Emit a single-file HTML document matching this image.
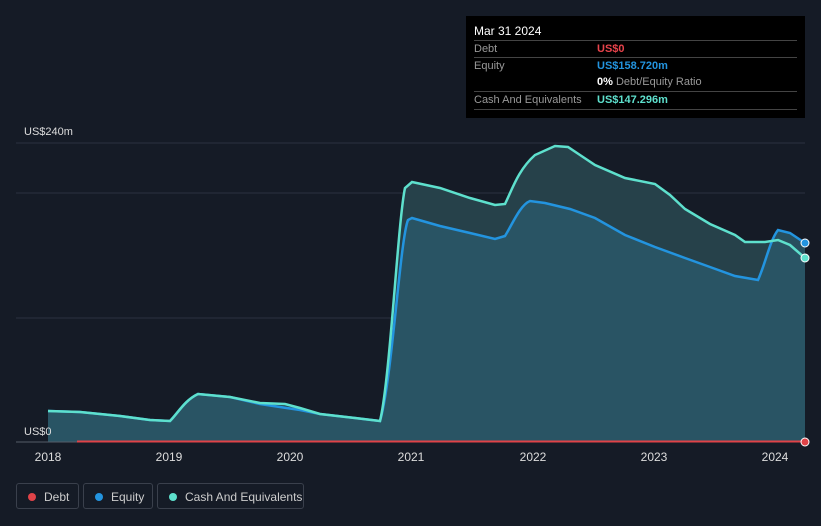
<!DOCTYPE html>
<html><head><meta charset="utf-8"><style>
html,body{margin:0;padding:0;background:#151b26;width:821px;height:526px;overflow:hidden;font-family:"Liberation Sans",sans-serif;}
.tip{position:absolute;left:466px;top:16px;width:339px;height:102px;background:#000;color:#ddd;font-size:11px;}
.tip .r{position:absolute;left:8px;right:8px;border-top:1px solid #444;height:17px;line-height:17px;color:#999}
.tip .v{position:absolute;left:123px;font-weight:bold}
.leg{position:absolute;top:483px;height:26px;border:1px solid #3a404c;border-radius:3px;color:#ccc;font-size:12px;line-height:26px;box-sizing:border-box;white-space:nowrap}
.leg i{position:absolute;left:11px;top:9px;width:8px;height:8px;border-radius:50%}
.leg span{position:absolute;left:27px;top:0}
</style></head><body>
<svg width="821" height="526" style="position:absolute;left:0;top:0">
<line x1="16" y1="143" x2="805" y2="143" stroke="#2b3240"/>
<line x1="16" y1="193" x2="805" y2="193" stroke="#2b3240"/>
<line x1="16" y1="318" x2="805" y2="318" stroke="#2b3240"/>
<path d="M48,411 L80,412 L120,416 L150,420 L170,421 C178,413 185,400 198,394 L230,397 L260,403 L285,404 L300,408 L320,414 L355,418 L380,421 C390,380 398,220 405,188 L412,182 L440,188 L470,198 L495,205 L505,204 C512,190 518,170 535,155 L555,146 L568,147 L580,155 L595,165 L625,178 L655,184 L670,195 L685,209 L710,224 L735,235 L745,242 L765,242 L778,240 L790,245 L805,258 L805,442 L48,442Z" fill="#26414a"/>
<path d="M48,411 L80,412 L120,416 L150,420 L170,421 C178,413 185,400 198,394 L230,397 L260,404 L300,410 L320,414 L355,418 L380,421 C392,380 400,240 408,220 L412,218 L440,226 L470,233 L495,239 L505,236 C512,225 520,205 530,201 L545,203 L570,209 L595,218 L625,235 L655,247 L685,258 L710,267 L735,276 L758,280 C765,265 770,240 778,230 L790,233 L805,243 L805,442 L48,442Z" fill="#2a5868" opacity="0.85"/>
<path d="M48,411 L80,412 L120,416 L150,420 L170,421 C178,413 185,400 198,394 L230,397 L260,404 L300,410 L320,414 L355,418 L380,421 C392,380 400,240 408,220 L412,218 L440,226 L470,233 L495,239 L505,236 C512,225 520,205 530,201 L545,203 L570,209 L595,218 L625,235 L655,247 L685,258 L710,267 L735,276 L758,280 C765,265 770,240 778,230 L790,233 L805,243" fill="none" stroke="#2394df" stroke-width="2.5"/>
<path d="M48,411 L80,412 L120,416 L150,420 L170,421 C178,413 185,400 198,394 L230,397 L260,403 L285,404 L300,408 L320,414 L355,418 L380,421 C390,380 398,220 405,188 L412,182 L440,188 L470,198 L495,205 L505,204 C512,190 518,170 535,155 L555,146 L568,147 L580,155 L595,165 L625,178 L655,184 L670,195 L685,209 L710,224 L735,235 L745,242 L765,242 L778,240 L790,245 L805,258" fill="none" stroke="#5ee0cd" stroke-width="2.5"/>
<line x1="16" y1="442" x2="805" y2="442" stroke="#555c68"/>
<line x1="77" y1="441.5" x2="805" y2="441.5" stroke="#e04348" stroke-width="2"/>
<circle cx="805" cy="442" r="4" fill="#e04348" stroke="#fff" stroke-width="1"/>
<circle cx="805" cy="243" r="4" fill="#2394df" stroke="#fff" stroke-width="1"/>
<circle cx="805" cy="258" r="4" fill="#5ee0cd" stroke="#fff" stroke-width="1"/>
<g fill="#ddd" font-size="11" font-family="Liberation Sans">
<text x="24" y="135">US$240m</text><text x="24" y="435">US$0</text>
</g>
<g fill="#ddd" font-size="12" font-family="Liberation Sans" text-anchor="middle">
<text x="48" y="461">2018</text><text x="169" y="461">2019</text><text x="290" y="461">2020</text><text x="411" y="461">2021</text><text x="533" y="461">2022</text><text x="654" y="461">2023</text><text x="775" y="461">2024</text>
</g>
</svg>
<div class="tip">
<div style="position:absolute;left:8px;top:8px;color:#fff;font-size:12px">Mar 31 2024</div>
<div class="r" style="top:24px">Debt<span class="v" style="color:#e8434b">US$0</span></div>
<div class="r" style="top:41px">Equity<span class="v" style="color:#2394df">US$158.720m</span></div>
<div class="r" style="top:58px;border-top:none"><span class="v" style="color:#fff">0% <span style="color:#999;font-weight:normal">Debt/Equity Ratio</span></span></div>
<div class="r" style="top:75px">Cash And Equivalents<span class="v" style="color:#5ee0cd">US$147.296m</span></div>
<div class="r" style="top:93px;height:0"></div>
</div>
<div class="leg" style="left:16px;width:63px"><i style="background:#e04348"></i><span>Debt</span></div>
<div class="leg" style="left:83px;width:70px"><i style="background:#2394df"></i><span>Equity</span></div>
<div class="leg" style="left:157px;width:147px"><i style="background:#5ee0cd"></i><span>Cash And Equivalents</span></div>
</body></html>
